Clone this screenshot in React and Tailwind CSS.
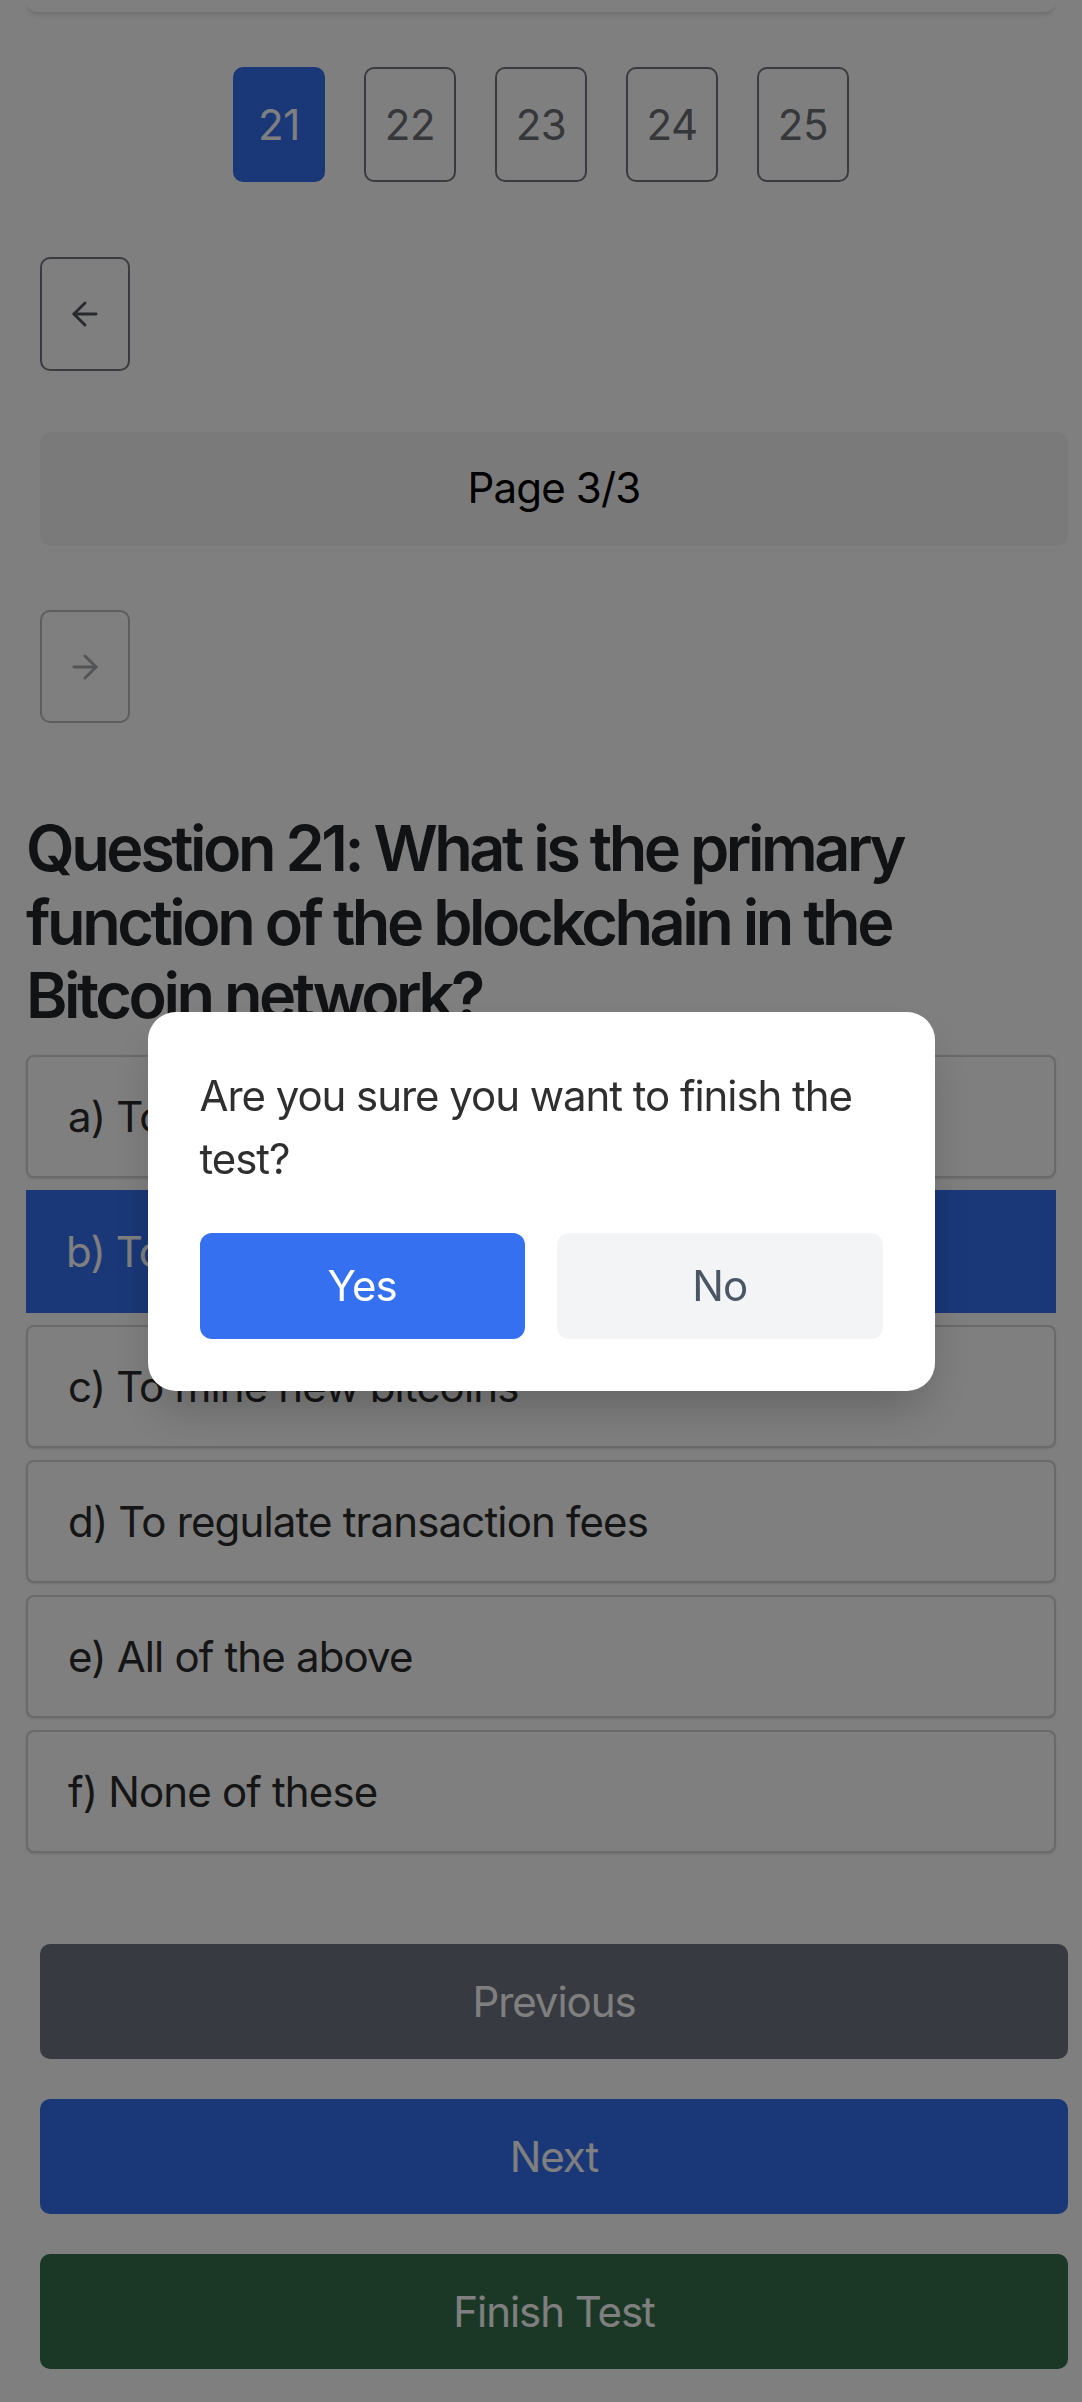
import React, { useState } from 'react';
import { ArrowLeft, ArrowRight } from 'lucide-react';

const pages = [21, 22, 23, 24, 25];

const options = [
  'a) To store Bitcoin wallets',
  'b) To record all transactions',
  'c) To mine new bitcoins',
  'd) To regulate transaction fees',
  'e) All of the above',
  'f) None of these',
];

const App = () => {
  const [current] = useState(21);
  const [selected, setSelected] = useState(1);
  const [confirmOpen, setConfirmOpen] = useState(true);

  return (
    <div className="relative min-h-screen bg-white font-['Inter',sans-serif]">
      {/* bottom edge of the card above, scrolled out of view */}
      <div className="mx-[26px] h-[12px] rounded-b-[12px] bg-white shadow-md" />

      <div className="mt-[55px] flex justify-center gap-[39px]">
        {pages.map((n) => (
          <button
            key={n}
            className={`flex h-[115px] w-[92px] items-center justify-center rounded-[10px] text-[42px] tracking-[-0.01em] ${
              n === current ? 'bg-[#3470f0] text-white' : 'border-[2.6px] border-[#73777f] text-[#6b6f77]'
            }`}
          >
            {n}
          </button>
        ))}
      </div>

      <div className="ml-[40px] mr-[14px] mt-[75px] flex flex-col">
        <button className="flex h-[114px] w-[90px] items-center justify-center rounded-[10px] border-[2.6px] border-[#73777f] text-[#4f535b]">
          <ArrowLeft size={38} strokeWidth={1.8} />
        </button>
        <div className="mt-[61px] flex h-[114px] items-center justify-center rounded-[10px] bg-neutral-100 pb-[4px] text-[42px] tracking-[-0.02em] text-black">
          Page 3/3
        </div>
        <button disabled className="mt-[64px] flex h-[113px] w-[90px] items-center justify-center rounded-[10px] border-[2.6px] border-[#73777f] text-[#4f535b] opacity-50">
          <ArrowRight size={38} strokeWidth={1.8} />
        </button>
      </div>

      <div className="mx-[26px] mt-[89px]">
        <h2 className="text-[63px] font-semibold leading-[73.5px] tracking-[-0.055em] text-[#232428]">
          Question 21: What is the primary function of the blockchain in the Bitcoin network?
        </h2>
        <div className="mt-[22px] flex flex-col gap-[12px]">
          {options.map((o, i) => (
            <button
              key={o}
              onClick={() => setSelected(i)}
              className={`flex h-[123px] items-center px-[40px] text-left text-[42px] leading-[63px] tracking-[-0.02em] ${
                selected === i
                  ? 'bg-[#3470f0] text-white'
                  : 'rounded-[8px] border-[2.6px] border-[#d4d4d4] bg-white text-[#2b2b2b] shadow-sm'
              }`}
            >
              {o}
            </button>
          ))}
        </div>
      </div>

      <div className="ml-[40px] mr-[14px] mt-[91px] flex flex-col gap-[40px] pb-[32px]">
        <button className="h-[115px] rounded-[10px] bg-[#6e7480] text-[42px] tracking-[-0.025em] text-white">Previous</button>
        <button className="h-[115px] rounded-[10px] bg-[#3470f0] text-[42px] tracking-[-0.025em] text-white">Next</button>
        <button onClick={() => setConfirmOpen(true)} className="h-[115px] rounded-[10px] bg-[#37704d] text-[42px] tracking-[-0.025em] text-white">
          Finish Test
        </button>
      </div>

      {confirmOpen && (
        <div className="fixed inset-0 flex items-center justify-center bg-black/50">
          <div className="w-[787px] rounded-[28px] bg-white p-[52px] shadow-2xl">
            <p className="mb-[43px] text-[42px] leading-[63px] tracking-[-0.025em] text-[#2f2f2f]">
              Are you sure you want to finish the test?
            </p>
            <div className="flex gap-[32px]">
              <button onClick={() => setConfirmOpen(false)} className="h-[106px] flex-1 rounded-[12px] bg-[#3470f0] text-[42px] tracking-[-0.02em] text-white">
                Yes
              </button>
              <button onClick={() => setConfirmOpen(false)} className="h-[106px] flex-1 rounded-[12px] bg-gray-100 text-[42px] tracking-[-0.02em] text-gray-600">
                No
              </button>
            </div>
          </div>
        </div>
      )}
    </div>
  );
};

export default App;
